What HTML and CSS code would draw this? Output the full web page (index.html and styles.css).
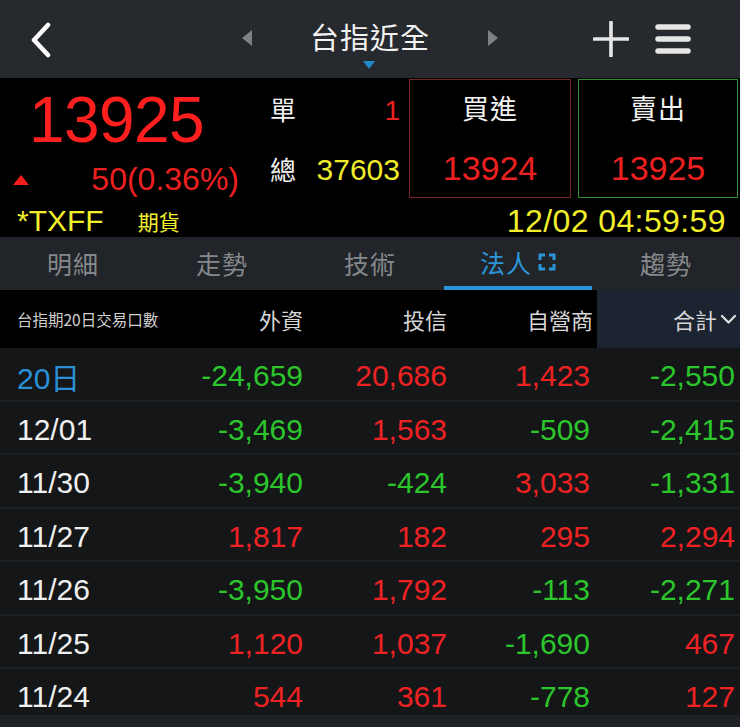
FILE: index.html
```html
<!DOCTYPE html>
<html lang="zh-Hant">
<head>
<meta charset="utf-8">
<title>台指近全</title>
<link rel="stylesheet" href="styles.css">
</head>
<body>
<div class="app">
  <header class="topbar">
    <div class="left">
      <svg class="back" width="26" height="36" viewBox="0 0 26 36"><path d="M20 3 L6 18 L20 33" stroke="#fff" stroke-width="4.6" fill="none" stroke-linecap="round" stroke-linejoin="round"/></svg>
    </div>
    <div class="center">
      <span class="tri tri-left"></span>
      <div class="title">台指近全<span class="tri-down"></span></div>
      <span class="tri tri-right"></span>
    </div>
    <div class="right">
      <svg width="36" height="36" viewBox="0 0 36 36"><path d="M18 1 V35 M1 18 H35" stroke="#e6e6e6" stroke-width="3.6" stroke-linecap="round"/></svg>
      <svg width="36" height="32" viewBox="0 0 36 32"><path d="M3 4 H33 M3 16 H33 M3 28 H33" stroke="#e6e6e6" stroke-width="5.5" stroke-linecap="round"/></svg>
    </div>
  </header>

  <section class="quote">
    <div class="price">
      <div class="last">13925</div>
      <div class="change"><span class="up"></span><span class="chg">50(0.36%)</span></div>
    </div>
    <div class="vol">
      <div class="vrow"><span class="lbl">單</span><span class="single">1</span></div>
      <div class="vrow second"><span class="lbl">總</span><span class="total">37603</span></div>
    </div>
    <div class="box buy">
      <div class="blabel">買進</div>
      <div class="bnum">13924</div>
    </div>
    <div class="box sell">
      <div class="blabel">賣出</div>
      <div class="bnum">13925</div>
    </div>
  </section>

  <section class="info">
    <span class="sym">*TXFF</span>
    <span class="kind">期貨</span>
    <span class="time">12/02 04:59:59</span>
  </section>

  <nav class="tabs">
    <div class="tab">明細</div>
    <div class="tab">走勢</div>
    <div class="tab">技術</div>
    <div class="tab active">法人<svg class="expand" width="18" height="18" viewBox="0 0 18 18"><path d="M2 7 V2 H7 M11 2 H16 V7 M16 11 V16 H11 M7 16 H2 V11" stroke="#2b95d9" stroke-width="3" fill="none"/></svg></div>
    <div class="tab">趨勢</div>
  </nav>

  <div class="thead">
    <div class="c0 sub">台指期20日交易口數</div>
    <div class="c">外資</div>
    <div class="c">投信</div>
    <div class="c c3">自營商</div>
    <div class="c c4">合計<svg width="17" height="12" viewBox="0 0 17 12"><path d="M2 3 L8.5 9.5 L15 3" stroke="#e0e0e0" stroke-width="2.2" fill="none" stroke-linecap="round" stroke-linejoin="round"/></svg></div>
  </div>

  <div class="tbody">
    <div class="row"><div class="c0 blue">20日</div><div class="n g">-24,659</div><div class="n r">20,686</div><div class="n r">1,423</div><div class="n g">-2,550</div></div>
    <div class="row"><div class="c0">12/01</div><div class="n g">-3,469</div><div class="n r">1,563</div><div class="n g">-509</div><div class="n g">-2,415</div></div>
    <div class="row"><div class="c0">11/30</div><div class="n g">-3,940</div><div class="n g">-424</div><div class="n r">3,033</div><div class="n g">-1,331</div></div>
    <div class="row"><div class="c0">11/27</div><div class="n r">1,817</div><div class="n r">182</div><div class="n r">295</div><div class="n r">2,294</div></div>
    <div class="row"><div class="c0">11/26</div><div class="n g">-3,950</div><div class="n r">1,792</div><div class="n g">-113</div><div class="n g">-2,271</div></div>
    <div class="row"><div class="c0">11/25</div><div class="n r">1,120</div><div class="n r">1,037</div><div class="n g">-1,690</div><div class="n r">467</div></div>
    <div class="row"><div class="c0">11/24</div><div class="n r">544</div><div class="n r">361</div><div class="n g">-778</div><div class="n r">127</div></div>
  </div>
  <div class="footer"></div>
</div>
</body>
</html>
```
FILE: styles.css
```css
* { box-sizing: border-box; }
html, body { margin: 0; padding: 0; background: #000; }
body {
  width: 740px;
  height: 727px;
  overflow: hidden;
  font-family: "Liberation Sans", "Noto Sans CJK TC", sans-serif;
}
.app { width: 740px; height: 727px; display: flex; flex-direction: column; }

/* top bar */
.topbar {
  height: 78px;
  background: #26292d;
  display: grid;
  grid-template-columns: 1fr auto 1fr;
  align-items: center;
}
.left { padding-left: 28px; display: flex; align-items: center; padding-top: 2px; }
.center { display: flex; align-items: center; gap: 58px; }
.title {
  position: relative;
  font-family: "Noto Sans CJK TC", sans-serif;
  font-size: 29px;
  line-height: 30px;
  color: #f2f2f2;
  letter-spacing: 1px;
  margin-top: -6px;
}
.tri-down {
  position: absolute;
  left: 50%;
  top: 40px;
  margin-left: -7px;
  width: 0; height: 0;
  border-left: 6px solid transparent;
  border-right: 6px solid transparent;
  border-top: 8px solid #2488cc;
}
.tri { width: 0; height: 0; border-top: 8px solid transparent; border-bottom: 8px solid transparent; margin-top: -2px; }
.tri-left { border-right: 10px solid #7e8185; }
.tri-right { border-left: 10px solid #7e8185; }
.right { display: flex; justify-content: flex-end; align-items: center; gap: 26px; padding-right: 49px; }

/* quote */
.quote { height: 122px; background: #000; display: flex; }
.price { width: 260px; display: flex; flex-direction: column; }
.last {
  font-size: 64px;
  line-height: 64px;
  color: #ff1f1f;
  padding-left: 29px;
  margin-top: 10px;
  letter-spacing: -0.6px;
}
.change {
  display: flex;
  justify-content: space-between;
  align-items: center;
  padding: 0 21px 0 13px;
  margin-top: 11px;
  height: 32px;
}
.up {
  width: 0; height: 0;
  border-left: 8px solid transparent;
  border-right: 8px solid transparent;
  border-bottom: 10px solid #f21c1c;
  margin-top: 2px;
}
.chg { font-size: 32px; line-height: 32px; color: #ec2020; }
.vol { width: 149px; padding: 18px 9px 0 10px; }
.vrow { display: flex; justify-content: space-between; align-items: baseline; height: 26px; line-height: 26px; }
.vrow.second { margin-top: 34px; }
.lbl { font-family: "Noto Sans CJK TC", sans-serif; font-size: 26px; color: #f2f2f2; }
.single { font-size: 28px; color: #ec2020; }
.total { font-size: 30px; color: #f0ec2c; }
.box {
  margin-top: 1px;
  height: 119px;
  display: flex;
  flex-direction: column;
  align-items: center;
  padding-top: 14px;
}
.buy { width: 162px; border: 1.5px solid #7a2424; }
.sell { width: 160px; margin-left: 7px; border: 1.5px solid #2f8d33; }
.blabel { font-family: "Noto Sans CJK TC", sans-serif; font-size: 27px; line-height: 28px; color: #f2f2f2; letter-spacing: 1px; }
.bnum { font-size: 34px; line-height: 34px; color: #ec2020; margin-top: 29px; }

/* info */
.info {
  height: 37px;
  background: #000;
  display: flex;
  align-items: center;
  padding: 4px 14px 0 17px;
  color: #f3ee2a;
}
.sym { font-size: 30px; line-height: 30px; }
.kind { font-family: "Noto Sans CJK TC", sans-serif; font-size: 21px; line-height: 24px; margin-left: 34px; }
.time { margin-left: auto; font-size: 32px; line-height: 30px; letter-spacing: 0.4px; }

/* tabs */
.tabs {
  height: 53px;
  background: #212428;
  display: grid;
  grid-template-columns: repeat(5, 148px);
}
.tab {
  display: flex;
  align-items: center;
  justify-content: center;
  font-family: "Noto Sans CJK TC", sans-serif;
  font-size: 25px;
  color: #85888c;
  letter-spacing: 1px;
  padding-bottom: 2px;
}
.tab:first-child { justify-content: flex-start; padding-left: 47px; }
.tab.active { color: #2b95d9; border-bottom: 4px solid #2b95d9; padding-bottom: 0; padding-left: 0; }
.expand { margin-left: 6px; }

/* table */
.thead {
  height: 58px;
  background: #000;
  display: grid;
  grid-template-columns: 160px 143px 144px 150px 143px;
  align-items: stretch;
}
.thead .c {
  display: flex;
  align-items: center;
  justify-content: flex-end;
  font-family: "Noto Sans CJK TC", sans-serif;
  font-size: 22px;
  color: #d6d6d6;
}
.thead .c3 { padding-right: 4px; }
.thead .c4 { background: #1b2430; padding-right: 3px; gap: 3px; }
.thead .sub {
  display: flex;
  align-items: center;
  padding-left: 17px;
  font-family: "Noto Sans CJK TC", sans-serif;
  font-size: 15.5px;
  color: #d0d0d0;
  white-space: nowrap;
}
.tbody { height: 367px; overflow: hidden; background: #141618; }
.row {
  height: 53.5px;
  display: grid;
  grid-template-columns: 160px 143px 144px 143px 145px;
  align-items: center;
  border-bottom: 2px solid #1d2023;
  padding-top: 5px;
  background: #141618;
}
.row .c0 { padding-left: 17px; font-size: 30px; color: #f0f0f0; }
.row .c0.blue { color: #2b90d6; }
.n { text-align: right; font-size: 30px; }
.g { color: #2cc52c; }
.r { color: #ee2222; }
.footer { height: 12px; background: #1e2125; }
```
